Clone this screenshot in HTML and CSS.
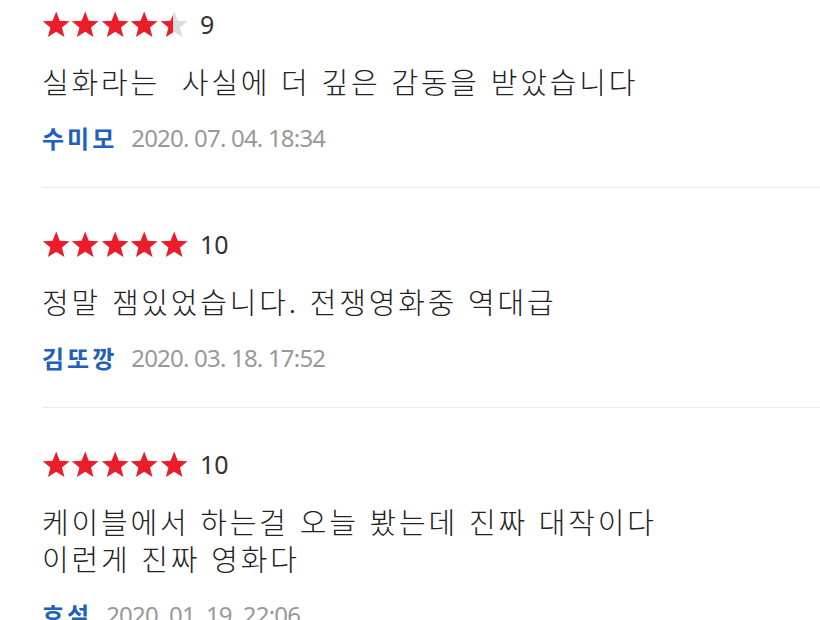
FILE: index.html
```html
<!DOCTYPE html>
<html lang="ko">
<head>
<meta charset="utf-8">
<link rel="stylesheet" href="styles.css">
</head>
<body>
<svg width="0" height="0" class="defs">
  <defs>
    <path id="star" d="M12 0.5L15.06 8.29L23.41 8.79L16.95 14.11L19.05 22.21L12 17.7L4.95 22.21L7.05 14.11L0.59 8.79L8.94 8.29Z"/>
    <linearGradient id="half" x1="0" x2="1" y1="0" y2="0">
      <stop offset="0.47" stop-color="#ec1d2b"/>
      <stop offset="0.47" stop-color="#dcdcdc"/>
    </linearGradient>
  </defs>
</svg>
<ul class="reviews">
  <li class="review">
    <div class="rating">
      <span class="stars">
        <svg class="star" viewBox="0 0 24 23"><use href="#star"/></svg>
        <svg class="star" viewBox="0 0 24 23"><use href="#star"/></svg>
        <svg class="star" viewBox="0 0 24 23"><use href="#star"/></svg>
        <svg class="star" viewBox="0 0 24 23"><use href="#star"/></svg>
        <svg class="star star-half" viewBox="0 0 24 23"><use href="#star"/></svg>
      </span>
      <span class="score">9</span>
    </div>
    <p class="text">실화라는&nbsp; 사실에 더 깊은 감동을 받았습니다</p>
    <div class="meta"><span class="nick">수미모</span><span class="date">2020. 07. 04. 18:34</span></div>
  </li>
  <li class="review">
    <div class="rating">
      <span class="stars">
        <svg class="star" viewBox="0 0 24 23"><use href="#star"/></svg>
        <svg class="star" viewBox="0 0 24 23"><use href="#star"/></svg>
        <svg class="star" viewBox="0 0 24 23"><use href="#star"/></svg>
        <svg class="star" viewBox="0 0 24 23"><use href="#star"/></svg>
        <svg class="star" viewBox="0 0 24 23"><use href="#star"/></svg>
      </span>
      <span class="score">10</span>
    </div>
    <p class="text">정말 잼있었습니다. 전쟁영화중 역대급</p>
    <div class="meta"><span class="nick">김또깡</span><span class="date">2020. 03. 18. 17:52</span></div>
  </li>
  <li class="review">
    <div class="rating">
      <span class="stars">
        <svg class="star" viewBox="0 0 24 23"><use href="#star"/></svg>
        <svg class="star" viewBox="0 0 24 23"><use href="#star"/></svg>
        <svg class="star" viewBox="0 0 24 23"><use href="#star"/></svg>
        <svg class="star" viewBox="0 0 24 23"><use href="#star"/></svg>
        <svg class="star" viewBox="0 0 24 23"><use href="#star"/></svg>
      </span>
      <span class="score">10</span>
    </div>
    <p class="text">케이블에서 하는걸 오늘 봤는데 진짜 대작이다<br>이런게 진짜 영화다</p>
    <div class="meta"><span class="nick">호설</span><span class="date">2020. 01. 19. 22:06</span></div>
  </li>
</ul>
</body>
</html>
```
FILE: styles.css
```css
html, body {
  margin: 0;
  padding: 0;
  background: #fff;
}
body {
  font-family: "Noto Sans CJK KR", "Noto Sans", sans-serif;
  color: #222;
  overflow: hidden;
}
.defs {
  position: absolute;
  width: 0;
  height: 0;
}
.reviews {
  list-style: none;
  margin: -33px 0 0 42px;
  padding: 0;
}
.review {
  border-top: 1px solid #ebebeb;
  padding: 41px 0 35px;
}
.rating {
  display: flex;
  align-items: center;
  height: 30px;
}
.stars {
  display: flex;
  gap: 1px;
}
.star {
  width: 28.4px;
  height: 27px;
  fill: #ec1d2b;
}
.star-half {
  fill: url(#half);
}
.score {
  margin-left: 12px;
  font-family: "Noto Sans", sans-serif;
  font-size: 25px;
  line-height: 30px;
  color: #333;
}
.text {
  margin: 24px 0 0;
  font-size: 29px;
  line-height: 37px;
  font-weight: 300;
  color: #222;
  letter-spacing: 2.8px;
}
.meta {
  margin-top: 22px;
  height: 30px;
  display: flex;
  align-items: center;
  gap: 14px;
}
.nick {
  font-size: 24px;
  font-weight: 700;
  color: #2160b8;
  letter-spacing: 3px;
}
.date {
  font-family: "Noto Sans", sans-serif;
  font-size: 24px;
  color: #999;
  letter-spacing: -0.8px;
}
```
